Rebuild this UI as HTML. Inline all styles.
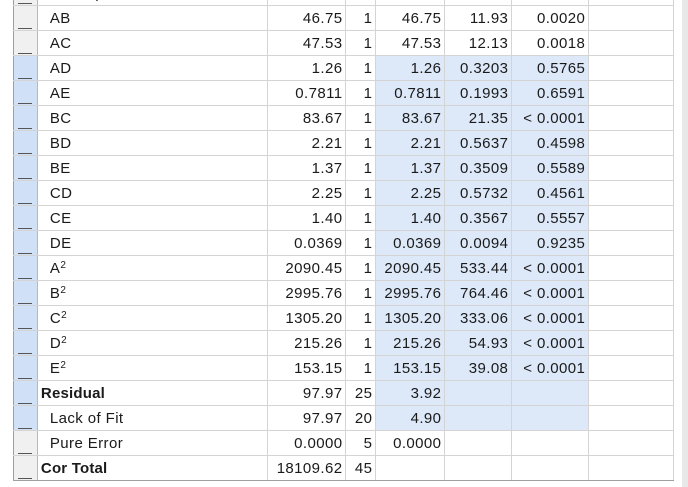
<!DOCTYPE html>
<html><head><style>
html,body{margin:0;padding:0;width:688px;height:487px;overflow:hidden;background:#fff;font-family:"Liberation Sans",sans-serif;}
#wrap{position:absolute;left:13px;top:-20px;width:661px;}
table{border-collapse:collapse;table-layout:fixed;font-size:15px;letter-spacing:0.4px;color:#1a1a1a;}
tr{height:25px;}
td{border:1px solid #d4d4d4;height:24px;line-height:22px;padding:2px 3px 0 0;box-sizing:border-box;white-space:nowrap;overflow:hidden;text-align:right;}
td.h{background:#f0f0f0;border-left:1px solid #a0a0a0;border-right:1px solid #b8b8b8;position:relative;padding:0;}
td.h.b{background:#cfe0f7;}
td.h:after{content:"";position:absolute;left:4px;right:5px;bottom:1px;height:1px;background:#555;}
td.s{text-align:left;padding-left:12px;}
td.bold{font-weight:bold;padding-left:3px;letter-spacing:0.2px;}
td.x{background:#dde9f9;}
tr:last-child td{border-bottom:1px solid #a0a0a0;}
sup{font-size:10px;vertical-align:5px;line-height:0;}
#sb{position:absolute;right:0;top:0;width:6px;height:487px;background:#e8e8e8;}
</style></head><body>
<div id="wrap"><table>
<colgroup><col style="width:24px"><col style="width:231px"><col style="width:78px"><col style="width:30px"><col style="width:69px"><col style="width:67px"><col style="width:77px"><col style="width:85px"></colgroup>
<tr><td class="h"></td><td class="s">B-Temperature</td><td>73.53</td><td>1</td><td>73.53</td><td>18.77</td><td>0.0002</td><td></td></tr>
<tr><td class="h"></td><td class="s">AB</td><td>46.75</td><td>1</td><td>46.75</td><td>11.93</td><td>0.0020</td><td></td></tr>
<tr><td class="h"></td><td class="s">AC</td><td>47.53</td><td>1</td><td>47.53</td><td>12.13</td><td>0.0018</td><td></td></tr>
<tr><td class="h b"></td><td class="s">AD</td><td>1.26</td><td>1</td><td class="x">1.26</td><td class="x">0.3203</td><td class="x">0.5765</td><td></td></tr>
<tr><td class="h b"></td><td class="s">AE</td><td>0.7811</td><td>1</td><td class="x">0.7811</td><td class="x">0.1993</td><td class="x">0.6591</td><td></td></tr>
<tr><td class="h b"></td><td class="s">BC</td><td>83.67</td><td>1</td><td class="x">83.67</td><td class="x">21.35</td><td class="x">&lt; 0.0001</td><td></td></tr>
<tr><td class="h b"></td><td class="s">BD</td><td>2.21</td><td>1</td><td class="x">2.21</td><td class="x">0.5637</td><td class="x">0.4598</td><td></td></tr>
<tr><td class="h b"></td><td class="s">BE</td><td>1.37</td><td>1</td><td class="x">1.37</td><td class="x">0.3509</td><td class="x">0.5589</td><td></td></tr>
<tr><td class="h b"></td><td class="s">CD</td><td>2.25</td><td>1</td><td class="x">2.25</td><td class="x">0.5732</td><td class="x">0.4561</td><td></td></tr>
<tr><td class="h b"></td><td class="s">CE</td><td>1.40</td><td>1</td><td class="x">1.40</td><td class="x">0.3567</td><td class="x">0.5557</td><td></td></tr>
<tr><td class="h b"></td><td class="s">DE</td><td>0.0369</td><td>1</td><td class="x">0.0369</td><td class="x">0.0094</td><td class="x">0.9235</td><td></td></tr>
<tr><td class="h b"></td><td class="s">A<sup>2</sup></td><td>2090.45</td><td>1</td><td class="x">2090.45</td><td class="x">533.44</td><td class="x">&lt; 0.0001</td><td></td></tr>
<tr><td class="h b"></td><td class="s">B<sup>2</sup></td><td>2995.76</td><td>1</td><td class="x">2995.76</td><td class="x">764.46</td><td class="x">&lt; 0.0001</td><td></td></tr>
<tr><td class="h b"></td><td class="s">C<sup>2</sup></td><td>1305.20</td><td>1</td><td class="x">1305.20</td><td class="x">333.06</td><td class="x">&lt; 0.0001</td><td></td></tr>
<tr><td class="h b"></td><td class="s">D<sup>2</sup></td><td>215.26</td><td>1</td><td class="x">215.26</td><td class="x">54.93</td><td class="x">&lt; 0.0001</td><td></td></tr>
<tr><td class="h b"></td><td class="s">E<sup>2</sup></td><td>153.15</td><td>1</td><td class="x">153.15</td><td class="x">39.08</td><td class="x">&lt; 0.0001</td><td></td></tr>
<tr><td class="h b"></td><td class="s bold">Residual</td><td>97.97</td><td>25</td><td class="x">3.92</td><td class="x"></td><td class="x"></td><td></td></tr>
<tr><td class="h b"></td><td class="s">Lack of Fit</td><td>97.97</td><td>20</td><td class="x">4.90</td><td class="x"></td><td class="x"></td><td></td></tr>
<tr><td class="h"></td><td class="s">Pure Error</td><td>0.0000</td><td>5</td><td>0.0000</td><td></td><td></td><td></td></tr>
<tr><td class="h"></td><td class="s bold">Cor Total</td><td>18109.62</td><td>45</td><td></td><td></td><td></td><td></td></tr>
</table></div>
<div id="sb"></div>
</body></html>
